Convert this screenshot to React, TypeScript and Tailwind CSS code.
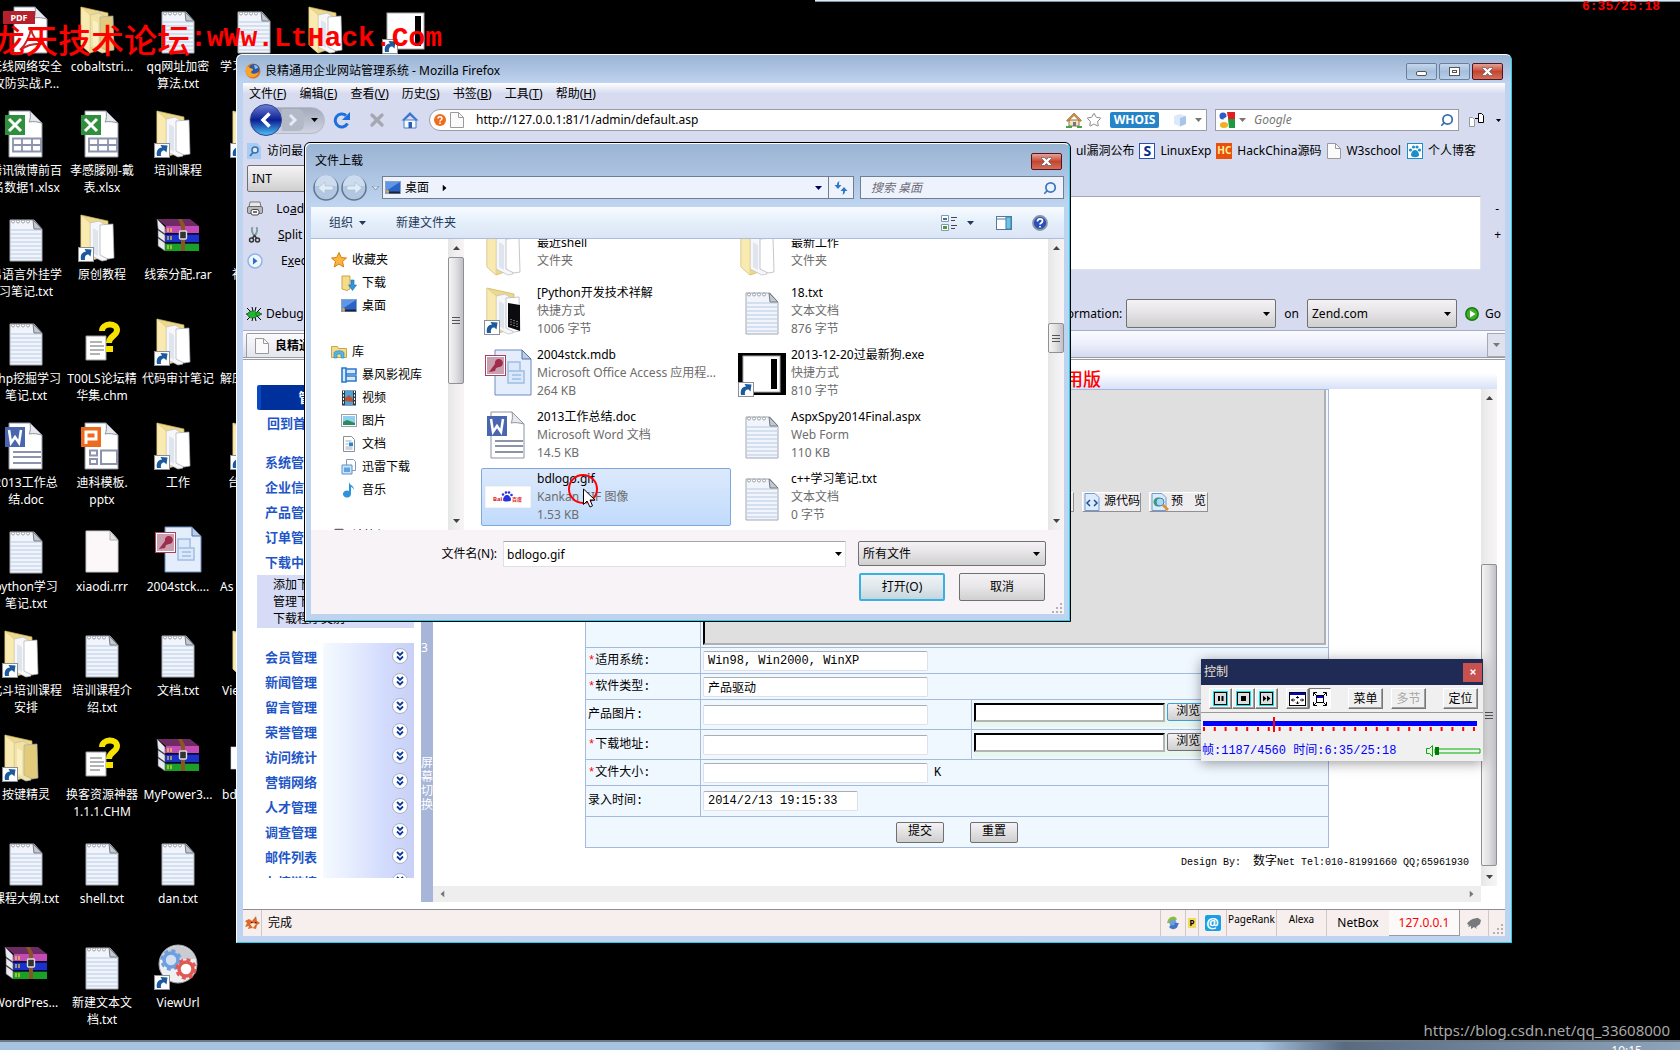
import type { ReactNode } from 'react';
import { Printer, Search, Star, X } from 'lucide-react';

/* ---------- Desktop icons ---------- */

const ShortcutMark = () => (
  <g>
    <rect x="0.5" y="33.5" width="15" height="14" fill="#fff" stroke="#8a8f98" />
    <path d="M3 46c-1-5 1-8 5-8.500l-1.500-2.500 7 .5-1 7-2-2c-3 0-4 2-3.500 5.500z" fill="#1c5a9e" />
  </g>
);

const TxtIcon = () => (
  <svg viewBox="0 0 48 48" className="size-12">
    <path d="M8 6h24l8 9v32H8z" fill="#f1f4fb" stroke="#a3a8b0" />
    <path d="M9 16h30M9 20h30M9 24h30M9 28h30M9 32h30M9 36h30M9 40h30M9 44h30" stroke="#b4cbe6" />
    <path d="M31 6l9 9h-8z" fill="#c3c7ce" stroke="#777c85" />
    <g fill="#fff" stroke="#8b9099" strokeWidth="0.8">
      <circle cx="11" cy="7.500" r="1.500" />
      <circle cx="16" cy="7.500" r="1.500" />
      <circle cx="21" cy="7.500" r="1.500" />
      <circle cx="26" cy="7.500" r="1.500" />
    </g>
  </svg>
);

type FolderProps = { shortcut?: boolean; full?: boolean; photo?: boolean };

const FolderIcon = ({ shortcut = false, full = false, photo = false }: FolderProps) => (
  <svg viewBox="0 0 48 48" className="size-12">
    <path d="M3 1l27 6v34L12 47 3 39z" fill="#ecd98c" stroke="#c9b25e" strokeWidth="0.7" />
    <path d="M12 9l9-2 8 5v34l-5 1-12-6z" fill={full ? '#f3e2a0' : '#f7f7f9'} stroke="#b9bcc4" strokeWidth="0.7" />
    <path d="M22 11l13-1 1 34-6 1-8-4z" fill={full ? '#e2cc7c' : '#ffffff'} stroke="#a9adb6" strokeWidth="0.7" />
    <path d="M15 14l5 3v25l-5-3z" fill={full ? '#fbf0c4' : '#dfe5ef'} />
    {photo && (
      <>
        <path d="M24 16l12 2v26l-12-4z" fill="#0c0c0e" />
        <path d="M27 32v6M30 33v6M33 34v6" stroke="#c8c8c8" strokeDasharray="1 1.500" />
      </>
    )}
    <path d="M3 1l9 8v38l-9-8z" fill="#f8eab0" stroke="#d9c67c" strokeWidth="0.5" />
    {shortcut && <ShortcutMark />}
  </svg>
);

const Page = ({ stroke = '#8d93a0' }: { stroke?: string }) => (
  <>
    <path d="M7 1h21l12 12v34H7z" fill="#fff" stroke={stroke} />
    <path d="M28 1c1 6 0 9-1 11 4-1 9 0 13 1z" fill="#e6e8ec" stroke={stroke} />
  </>
);

const ExcelIcon = () => (
  <svg viewBox="0 0 48 48" className="size-12">
    <Page />
    <path d="M11 28.500h28v13H11zM11 35h28M20 28.500v13M30 28.500v13" fill="none" stroke="#8b93ad" strokeWidth="1.800" />
    <rect x="3" y="5" width="20" height="20" fill="#2f8f3c" />
    <path d="M7 9l12 12M19 9L7 21" stroke="#fff" strokeWidth="3" />
  </svg>
);

const WordIcon = () => (
  <svg viewBox="0 0 48 48" className="size-12">
    <Page />
    <path d="M11 30h28M11 35h28M11 41h28" stroke="#8b93ad" strokeWidth="2" />
    <rect x="3" y="5" width="20" height="20" fill="#4a66b0" />
    <path d="M7 8l2 13 4-6 4 6 2-13" fill="none" stroke="#fff" strokeWidth="2.500" />
  </svg>
);

const PptIcon = () => (
  <svg viewBox="0 0 48 48" className="size-12">
    <Page />
    <path d="M12 28.500h7v5h-7zM12 37h7v5h-7zM23 28.500h16V42H23z" fill="none" stroke="#8b93ad" strokeWidth="2" />
    <rect x="3" y="5" width="20" height="20" fill="#ee6a1c" />
    <path d="M8 22V10h10v7H8" fill="none" stroke="#fff" strokeWidth="3" />
  </svg>
);

const PdfIcon = () => (
  <svg viewBox="0 0 48 48" className="size-12">
    <g transform="translate(5 0)">
      <Page />
    </g>
    <path d="M18 44c6-6 10-14 11-22 1 9 6 14 13 16-8-1-17 1-24 6z" fill="none" stroke="#c4282d" strokeWidth="2" />
    <rect x="1" y="5" width="32" height="13" fill="#b5202c" />
    <text x="17" y="15" textAnchor="middle" fontSize="9" fontWeight="700" fontFamily="Noto Sans, sans-serif" fill="#fff">
      PDF
    </text>
  </svg>
);

const RarIcon = () => (
  <svg viewBox="0 0 48 48" className="size-12">
    <path d="M3 5h33l9 7H12z" fill="#6d2a63" />
    <path d="M12 12h33v7H10z" fill="#c34bb4" />
    <path d="M10 20h35v8H10z" fill="#1c31c9" />
    <path d="M10 29h35v8H10z" fill="#1c9f28" />
    <path d="M10 20h35M10 29h35" stroke="#0a0a3a" strokeWidth="1.500" />
    <path d="M3 5l8 8v7L4 15zM4 16l7 5v7l-7-5zM4 24l7 5v8l-7-5z" fill="#e9eaf2" stroke="#555" strokeWidth="0.6" />
    <path d="M14 14v4M17 14v4M14 22v4M17 22v4M14 31v4M17 31v4" stroke="#f3dc3a" strokeWidth="1.200" />
    <path d="M24 5h4l3 6v26h-4V12z" fill="#8a5424" />
    <rect x="25.500" y="17" width="7" height="8" rx="1" fill="#333" stroke="#ddd" strokeWidth="1.400" />
  </svg>
);

const ChmIcon = () => (
  <svg viewBox="0 0 48 48" className="size-12">
    <path d="M8 18h20v24H8z" fill="#fff" stroke="#9a9a9a" />
    <path d="M12 24h12M12 28h14M12 32h14M12 36h10" stroke="#999" strokeWidth="1.500" />
    <path d="M24 13c0-8 15-9 15-1 0 6-8 6-8 13" fill="none" stroke="#f4e400" strokeWidth="6" />
    <rect x="28" y="28" width="7" height="6" fill="#f4e400" />
  </svg>
);

const BlankIcon = () => (
  <svg viewBox="0 0 48 48" className="size-12">
    <path d="M8 5h24l8 9v32H8z" fill="#fcf8f9" stroke="#c9c9cc" />
    <path d="M32 5v9h8z" fill="#e3e3e6" stroke="#b0b0b4" />
  </svg>
);

const AccessIcon = () => (
  <svg viewBox="0 0 48 48" className="size-12">
    <path d="M11 1h27l9 9v36H11z" fill="#e4edfb" stroke="#6c8cc0" />
    <path d="M38 1v9h9z" fill="#b9cdeb" stroke="#54709f" />
    <path d="M24 13h12v9H24zM24 22h16v12H24z" fill="#dbe8fa" stroke="#9fbde4" strokeWidth="1.500" />
    <path d="M28 26h9M28 30h9" stroke="#9fbde4" strokeWidth="1.500" />
    <rect x="1.500" y="6.500" width="20" height="20" fill="#fff" stroke="#a8415e" />
    <rect x="3" y="8" width="17" height="17" fill="#c9a0b0" />
    <path d="M5 23l6-8a4 4 0 114 3l-3 1-1 3z" fill="#a02b4d" />
  </svg>
);

const ExeIcon = () => (
  <svg viewBox="0 0 48 48" className="size-12">
    <rect x="0" y="4" width="48" height="42" fill="#000" />
    <rect x="5" y="7" width="37" height="36" fill="#fff" stroke="#aaa" />
    <rect x="33" y="10" width="6" height="30" fill="#000" />
    <ShortcutMark />
  </svg>
);

const GearsIcon = () => (
  <svg viewBox="0 0 48 48" className="size-12">
    <circle cx="24" cy="22" r="19" fill="#eef0f2" stroke="#9ea2a8" />
    <path d="M6 17a19 19 0 0136 0z" fill="#c9ccd1" />
    <circle cx="17" cy="18" r="9.500" fill="none" stroke="#6e9fe0" strokeWidth="2.500" strokeDasharray="4 3.500" />
    <circle cx="17" cy="18" r="7" fill="#d3e0f4" stroke="#6e9fe0" strokeWidth="3.500" />
    <circle cx="32" cy="27" r="9.500" fill="none" stroke="#e05a55" strokeWidth="2.500" strokeDasharray="4 3.500" />
    <circle cx="32" cy="27" r="7" fill="#fff" stroke="#e05a55" strokeWidth="3.500" />
    <ShortcutMark />
  </svg>
);

const GifIcon = () => (
  <svg viewBox="0 0 48 48" className="size-12">
    <rect x="1" y="13" width="46" height="22" fill="#fff" stroke="#d5dbe4" strokeWidth="0.6" />
    <text x="9" y="28" fontSize="6" fontWeight="700" fontFamily="Noto Sans, sans-serif" fill="#e02020">
      Bai
    </text>
    <text x="28" y="28" fontSize="5" fontWeight="700" fontFamily="Noto Sans CJK SC, sans-serif" fill="#e02020">
      百度
    </text>
    <path d="M19 27c0-3 2-5 4-5s4 2 4 5c0 2-8 2-8 0z" fill="#2932e1" />
    <circle cx="19" cy="21.500" r="1.300" fill="#2932e1" />
    <circle cx="22" cy="19.500" r="1.300" fill="#2932e1" />
    <circle cx="25" cy="19.500" r="1.300" fill="#2932e1" />
    <circle cx="27.500" cy="22" r="1.300" fill="#2932e1" />
  </svg>
);

type DesktopItem = { icon?: ReactNode; label: string; labelClass?: string };

const desktopItems: DesktopItem[] = [
  { icon: <PdfIcon />, label: '无线网络安全攻防实战.P...' },
  { icon: <FolderIcon full />, label: 'cobaltstri...' },
  { icon: <TxtIcon />, label: 'qq网址加密算法.txt' },
  { icon: <TxtIcon />, label: '学习', labelClass: 'text-left pl-1' },
  { icon: <FolderIcon />, label: '' },
  { icon: <ExeIcon />, label: '' },

  { icon: <ExcelIcon />, label: '腾讯微博前百名数据1.xlsx' },
  { icon: <ExcelIcon />, label: '孝感滕刚-戴表.xlsx' },
  { icon: <FolderIcon shortcut />, label: '培训课程' },
  { icon: <FolderIcon shortcut />, label: '' },
  { label: '' },
  { label: '' },

  { icon: <TxtIcon />, label: '易语言外挂学习笔记.txt' },
  { icon: <FolderIcon shortcut />, label: '原创教程' },
  { icon: <RarIcon />, label: '线索分配.rar' },
  { label: '社', labelClass: 'text-left pl-4' },
  { label: '' },
  { label: '' },

  { icon: <TxtIcon />, label: 'php挖掘学习笔记.txt' },
  { icon: <ChmIcon />, label: 'T00LS论坛精华集.chm' },
  { icon: <FolderIcon shortcut />, label: '代码审计笔记' },
  { label: '解压', labelClass: 'text-left pl-1' },
  { label: '' },
  { label: '' },

  { icon: <WordIcon />, label: '2013工作总结.doc' },
  { icon: <PptIcon />, label: '迪科模板.\npptx' },
  { icon: <FolderIcon shortcut />, label: '工作' },
  { icon: <FolderIcon shortcut />, label: '台', labelClass: 'text-left pl-3' },
  { label: '' },
  { label: '' },

  { icon: <TxtIcon />, label: 'python学习笔记.txt' },
  { icon: <BlankIcon />, label: 'xiaodi.rrr' },
  { icon: <AccessIcon />, label: '2004stck....' },
  { label: 'As', labelClass: 'text-left pl-1' },
  { label: '' },
  { label: '' },

  { icon: <FolderIcon shortcut />, label: '北斗培训课程安排' },
  { icon: <TxtIcon />, label: '培训课程介绍.txt' },
  { icon: <TxtIcon />, label: '文档.txt' },
  { icon: <FolderIcon />, label: 'View', labelClass: 'text-left pl-1.5' },
  { label: '' },
  { label: '' },

  { icon: <FolderIcon shortcut full />, label: '按键精灵' },
  { icon: <ChmIcon />, label: '换客资源神器1.1.1.CHM' },
  { icon: <RarIcon />, label: 'MyPower3...' },
  { icon: <GifIcon />, label: 'bdl', labelClass: 'text-left pl-1.5' },
  { label: '' },
  { label: '' },

  { icon: <TxtIcon />, label: '课程大纲.txt' },
  { icon: <TxtIcon />, label: 'shell.txt' },
  { icon: <TxtIcon />, label: 'dan.txt' },
  { label: '' },
  { label: '' },
  { label: '' },

  { icon: <RarIcon />, label: 'WordPres...' },
  { icon: <TxtIcon />, label: '新建文本文档.txt' },
  { icon: <GearsIcon />, label: 'ViewUrl' },
];

const Desktop = () => (
  <ul className="-ml-3 grid grid-cols-[repeat(6,76px)] auto-rows-[104px] pt-1.5 text-white">
    {desktopItems.map((item, i) => (
      <li key={i} className="flex flex-col items-center">
        <div className="size-12">{item.icon}</div>
        <span className={`mt-1 w-full px-px text-center leading-[17px] break-all whitespace-pre-line ${item.labelClass ?? ''}`}>{item.label}</span>
      </li>
    ))}
  </ul>
);

/* ---------- Shared bits ---------- */

const Caret = ({ className = 'fill-black' }: { className?: string }) => (
  <svg viewBox="0 0 7 4" className={`h-1 w-[7px] shrink-0 ${className}`}>
    <path d="M0 0h7L3.500 4z" />
  </svg>
);

const SheetIcon = () => (
  <svg viewBox="0 0 14 16" className="h-4 w-3.5 shrink-0">
    <path d="M.5.5h8l5 5v10H.5z" fill="#fafafa" stroke="#9a9a9a" />
    <path d="M8.500.5v5h5" fill="none" stroke="#9a9a9a" />
  </svg>
);

const CloseButton = () => (
  <button
    aria-label="关闭"
    className="flex h-[17px] w-[31px] items-center justify-center rounded-xs border border-[#541520] bg-linear-to-b from-[#e5a196] via-[#c4452f] via-50% to-[#d26e58]"
  >
    <svg viewBox="0 0 11 9" className="h-[9px] w-[11px]">
      <path d="M.5.5h3l2 2 2-2h3v1l-3 3 3 3v1h-3l-2-2-2 2h-3v-1l3-3-3-3z" fill="#fff" stroke="#5a5a6a" strokeWidth="0.700" />
    </svg>
  </button>
);

const Dropdown = ({ label, value, className }: { label: string; value: string; className: string }) => (
  <div className={`relative flex items-center ${className}`}>
    <select
      aria-label={label}
      defaultValue={value}
      className="size-full appearance-none rounded-xs border border-[#707070] bg-linear-to-b from-[#f5f2f5] via-[#e6e4e6] via-45% to-[#cfcfcf] px-1"
    >
      <option>{value}</option>
    </select>
    <Caret className="pointer-events-none absolute right-1.5 fill-black" />
  </div>
);

const ScrollBar = ({ before, thumb }: { before: string; thumb: string }) => (
  <div aria-hidden="true" className="flex w-4 shrink-0 flex-col items-center bg-linear-to-r from-[#e6e6e6] via-[#f0f0f0] to-[#f7f3f7]">
    <Caret className="my-[7px] rotate-180 fill-[#444]" />
    <div className={before} />
    <div
      className={`flex w-full flex-col items-center justify-center gap-[2px] rounded-xs border border-[#8f8f94] bg-linear-to-r from-[#f4f4f5] via-[#e0e0e2] to-[#bfc0c8] ${thumb}`}
    >
      <span className="h-px w-2 bg-[#555]" />
      <span className="h-px w-2 bg-[#555]" />
      <span className="h-px w-2 bg-[#555]" />
    </div>
    <Caret className="mt-auto mb-[7px] fill-[#444]" />
  </div>
);

const Grip = () => (
  <svg viewBox="0 0 10 10" className="size-2.5 shrink-0 fill-[#b4b0b4]">
    <path d="M8 0h2v2H8zM8 4h2v2H8zM8 8h2v2H8zM4 4h2v2H4zM4 8h2v2H4zM0 8h2v2H0z" />
  </svg>
);

/* ---------- Firefox window ---------- */

const menus = [
  ['文件', 'F'],
  ['编辑', 'E'],
  ['查看', 'V'],
  ['历史', 'S'],
  ['书签', 'B'],
  ['工具', 'T'],
  ['帮助', 'H'],
];

const TitleBar = () => (
  <div className="flex h-7 shrink-0 items-center gap-1 pt-1 pr-0.5 pl-0.5">
    <svg viewBox="0 0 16 16" className="size-4">
      <circle cx="8" cy="8" r="7.500" fill="#e4701e" />
      <circle cx="9" cy="6.500" r="5.500" fill="#2b58a8" />
      <path d="M9 2c2 0 4 1 4 3l-3 1z" fill="#8cc4ee" />
      <path d="M1 4c2-1 3 0 4 1l3 1c0 2-2 2-2 3 1 3 6 2 8-1-1 5-5 7-8 6C2 14 0 10 1 4z" fill="#f6a52a" />
    </svg>
    <h1>良精通用企业网站管理系统 - Mozilla Firefox</h1>
    <div className="ml-auto flex gap-0.5">
      <button aria-label="最小化" className="flex h-[17px] w-[31px] items-end justify-center rounded-xs border border-[#6c809c] bg-linear-to-b from-[#c6d7ec] via-[#a5bedb] via-50% to-[#b9cfea] pb-[3px]">
        <span className="h-[5px] w-[11px] rounded-xs border border-[#555] bg-white" />
      </button>
      <button aria-label="最大化" className="flex h-[17px] w-[31px] items-center justify-center rounded-xs border border-[#6c809c] bg-linear-to-b from-[#c6d7ec] via-[#a5bedb] via-50% to-[#b9cfea]">
        <span className="flex h-[9px] w-[11px] items-center justify-center border border-[#555] bg-white">
          <span className="h-[3px] w-[5px] border border-[#555]" />
        </span>
      </button>
      <CloseButton />
    </div>
  </div>
);

const NavBar = () => (
  <div className="flex h-8 shrink-0 items-center pl-1.5">
    <div className="flex h-[27px] items-center rounded-full border border-[#b4b9ca] bg-linear-to-b from-[#a4aabb] to-[#d0d4e3]">
      <button aria-label="后退" className="-my-1 rounded-full">
        <svg viewBox="0 0 32 32" className="size-8">
          <defs>
            <linearGradient id="back" x1="0" y1="0" x2="0" y2="1">
              <stop offset="0" stopColor="#6d7fd4" />
              <stop offset="0.500" stopColor="#0a1f93" />
              <stop offset="1" stopColor="#4cc4f8" />
            </linearGradient>
          </defs>
          <circle cx="16" cy="16" r="15.500" fill="url(#back)" stroke="#33438f" />
          <path d="M19.500 9.500L13 16l6.500 6.500" fill="none" stroke="#fff" strokeWidth="3.500" />
        </svg>
      </button>
      <button aria-label="前进" className="flex h-[22px] w-[22px] items-center justify-center rounded-r-md bg-[#b4b9c8]">
        <svg viewBox="0 0 10 12" className="h-3 w-2.5">
          <path d="M2 1l5 5-5 5" fill="none" stroke="#e6e9f2" strokeWidth="3" />
        </svg>
      </button>
      <button aria-label="历史" className="flex w-5 justify-center">
        <Caret />
      </button>
    </div>
    <button aria-label="刷新" className="ml-2">
      <svg viewBox="0 0 18 18" className="size-[18px]">
        <path d="M14.500 12.500A6.500 6.500 0 1113 4.500" fill="none" stroke="#1d6fdc" strokeWidth="3" />
        <path d="M17 1v8H9z" fill="#1d6fdc" />
      </svg>
    </button>
    <button aria-label="停止" className="ml-4">
      <X size={20} strokeWidth={4} className="text-[#a5a8b4]" />
    </button>
    <button aria-label="主页" className="ml-3.5">
      <svg viewBox="0 0 18 18" className="size-[18px]">
        <path d="M3 9h12v8H3z" fill="#f4f8ff" stroke="#4c7cc4" />
        <path d="M9 1L.5 9.500h3L9 4.500l5.500 5h3z" fill="#3a77d2" />
        <path d="M7.500 11h3.500v6H7.500z" fill="#2d5fb0" />
      </svg>
    </button>
    <div className="ml-2.5 flex h-[22px] min-w-0 flex-1 items-center gap-1 rounded-l-xl border border-[#9c9ca4] bg-white pr-1 pl-1">
      <svg viewBox="0 0 12 12" className="size-3 shrink-0">
        <circle cx="6" cy="6" r="6" fill="#ee6c1c" />
        <path d="M4 4.500c0-2.500 4-2.500 4 0C8 6 6 6 6 7.500M6 8.500V10" fill="none" stroke="#fff" strokeWidth="1.500" />
      </svg>
      <SheetIcon />
      <input aria-label="地址" defaultValue="http://127.0.0.1:81/1/admin/default.asp" className="ml-2 min-w-0 flex-1 outline-none" />
      <svg viewBox="0 0 16 16" className="size-4 shrink-0">
        <path d="M3 8h10v6H3z" fill="#f2e3c4" stroke="#8c7350" />
        <path d="M8 1L.5 8.500 2 9.500l6-6 6 6 1.500-1z" fill="#d5903e" stroke="#8f5c20" strokeWidth="0.600" />
        <path d="M7 10h3v4H7z" fill="#777" />
        <path d="M0 14h6v2H0zM11 14h5v2h-5z" fill="#46a546" />
      </svg>
      <Star size={16} strokeWidth={1.500} className="shrink-0 text-[#888]" />
      <span className="ml-1 flex h-4 w-[49px] shrink-0 items-center justify-center rounded-xs bg-[#2583c8] text-xs font-bold text-white">WHOIS</span>
      <svg viewBox="0 0 14 14" className="ml-2.5 size-3.5 shrink-0">
        <path d="M1 3l6-2 6 2v8l-6 2.500L1 11z" fill="#dce9fa" />
        <path d="M7 5l6-2v8l-6 2.500z" fill="#a9c6ea" />
      </svg>
      <Caret className="ml-1 fill-[#777]" />
    </div>
    <div className="ml-2 flex h-[22px] w-[244px] shrink-0 items-center gap-1 border border-[#9c9ca4] bg-white pr-1 pl-[3px]">
      <svg viewBox="0 0 16 16" className="size-4 shrink-0">
        <path d="M8 0h8v7H9z" fill="#e02020" />
        <path d="M9 7h7v9h-6z" fill="#1d9a40" />
        <circle cx="4" cy="4" r="3.500" fill="#2c5cc4" />
        <ellipse cx="5" cy="13" rx="4" ry="3" fill="#f0b020" />
        <path d="M4 7l5-3v7z" fill="#fff" />
      </svg>
      <Caret className="fill-[#777]" />
      <input aria-label="搜索" placeholder="Google" className="ml-1 min-w-0 flex-1 italic outline-none placeholder:text-[#777]" />
      <Search size={14} strokeWidth={3} className="shrink-0 -scale-x-100 text-[#3a6fa8]" />
    </div>
    <div className="flex w-[46px] items-center justify-between pr-1 pl-2.5">
      <svg viewBox="0 0 15 14" className="h-3.5 w-[15px]">
        <path d="M.5 4.500h3l2 2v7h-5z" fill="#fff" stroke="#999" />
        <path d="M9.500.5h3l2 2v7h-5z" fill="#fff" stroke="#000" />
        <path d="M6 5.500h3" stroke="#000" />
      </svg>
      <svg viewBox="0 0 5 3" className="h-[3px] w-[5px]">
        <path d="M0 0h5L2.500 3z" />
      </svg>
    </div>
  </div>
);

const Bookmarks = () => (
  <div className="flex h-[29px] shrink-0 items-center pr-[29px] pl-1">
    <svg viewBox="0 0 14 16" className="h-4 w-3.5">
      <path d="M0 0h10l4 4v12H0z" fill="#a9cdf2" />
      <circle cx="8" cy="7" r="3" fill="#dcecfb" stroke="#3b6eae" strokeWidth="1.500" />
      <path d="M6 9.500L3 13" stroke="#3b6eae" strokeWidth="1.800" />
    </svg>
    <a href="#top" className="ml-1.5">访问最多</a>
    <div className="ml-auto flex items-center gap-[5px] whitespace-nowrap">
      <a href="#vul">ul漏洞公布</a>
      <span className="flex size-4 items-center justify-center border border-[#2a4fb0] bg-white text-sm leading-none font-bold text-[#0a2d8c]">S</span>
      <a href="#linuxexp">LinuxExp</a>
      <span className="flex size-4 items-center justify-center bg-[#e8500c] text-[10px] font-bold text-[#ffef9a]">HC</span>
      <a href="#hackchina" className="mr-px">HackChina源码</a>
      <SheetIcon />
      <a href="#w3school" className="mr-px">W3school</a>
      <svg viewBox="0 0 16 16" className="size-4">
        <rect x="0.500" y="0.500" width="15" height="15" fill="#fff" stroke="#1b8fc6" />
        <path d="M4 12c0-3 2-5 4-5s4 2 4 5c0 3-8 3-8 0z" fill="#1b8fc6" />
        <circle cx="3.500" cy="7" r="1.600" fill="#1b8fc6" />
        <circle cx="6.500" cy="4" r="1.600" fill="#1b8fc6" />
        <circle cx="10" cy="4" r="1.600" fill="#1b8fc6" />
        <circle cx="12.500" cy="7" r="1.600" fill="#1b8fc6" />
      </svg>
      <a href="#blog">个人博客</a>
    </div>
  </div>
);

const HackBar = () => (
  <div className="shrink-0 pb-[23px] pl-1">
    <Dropdown label="类型" value="INT" className="h-[27px] w-32" />
    <div className="mt-1 flex">
      <div className="flex w-24 shrink-0 flex-col">
        <button className="flex h-[26px] items-center">
          <svg viewBox="0 0 16 16" className="size-4">
            <path d="M3 1h10l1 5H2z" fill="#e8e8ea" stroke="#777" />
            <rect x="0.500" y="5.500" width="15" height="7" rx="1.500" fill="#b9babd" stroke="#6c6c70" />
            <rect x="4" y="8.500" width="8" height="5.500" rx="2" fill="#fff" stroke="#444" />
            <path d="M6 11h4" stroke="#444" strokeWidth="1.500" />
          </svg>
          <span className="ml-3 w-14 text-center">Lo<u>a</u>d URL</span>
        </button>
        <button className="flex h-[26px] items-center">
          <svg viewBox="0 0 16 16" className="size-4">
            <path d="M5.500 0C4 3 5 6 8 10M9.500 0C11 3 10 6 7 10" fill="none" stroke="#7d9c9c" strokeWidth="1.800" />
            <circle cx="4.500" cy="13" r="2" fill="none" stroke="#333" strokeWidth="1.500" />
            <circle cx="10.500" cy="13" r="2" fill="none" stroke="#333" strokeWidth="1.500" />
            <path d="M5.500 11l2-2.500 2 2.500" fill="none" stroke="#333" strokeWidth="1.500" />
          </svg>
          <span className="ml-3 w-14 text-center"><u>S</u>plit URL</span>
        </button>
        <button className="flex h-[26px] items-center">
          <svg viewBox="0 0 16 16" className="size-4">
            <circle cx="8" cy="8" r="7" fill="#eef5fe" stroke="#8fb4e6" strokeWidth="1.500" />
            <path d="M6 4.500L10.500 8 6 11.500z" fill="#2d6fc8" />
          </svg>
          <span className="ml-3 w-14 text-center">E<u>x</u>ecute</span>
        </button>
      </div>
      <textarea aria-label="请求" className="h-[74px] min-w-0 flex-1 resize-none border border-[#e3e3e8] border-t-[#a5a5ad] bg-white" />
      <div className="flex w-6 shrink-0 flex-col items-end pr-1">
        <button className="h-[26px] px-0.5">-</button>
        <button className="h-[26px]">+</button>
      </div>
    </div>
  </div>
);

const DebugBar = () => (
  <div className="flex h-[34px] shrink-0 items-center border-b border-[#a8aec6] pr-1 pl-[3px]">
    <svg viewBox="0 0 16 16" className="size-4">
      <path d="M1 2l4 4M15 2l-4 4M0 8h16M1 14l4-4M15 14l-4-4M6 1l1 4M10 1L9 5M6 15l1-4M10 15l-1-4" stroke="#000" />
      <ellipse cx="6.500" cy="8.500" rx="5" ry="3.500" fill="#1fb52f" stroke="#0a4a10" strokeWidth="0.600" />
      <circle cx="12" cy="8" r="2.200" fill="#1fb52f" stroke="#0a4a10" strokeWidth="0.600" />
    </svg>
    <button className="ml-1">Debug</button>
    <span className="mr-1 ml-auto">formation:</span>
    <Dropdown label="搜索内容" value="" className="h-[29px] w-[150px]" />
    <span className="mx-2">on</span>
    <Dropdown label="搜索站点" value="Zend.com" className="h-[29px] w-[150px]" />
    <button className="ml-2 flex items-center gap-1.5">
      <svg viewBox="0 0 14 14" className="size-3.5">
        <circle cx="7" cy="7" r="6.200" fill="#3fae2a" stroke="#1d7a12" strokeWidth="1.500" />
        <path d="M5 3.500L10.500 7 5 10.500z" fill="#fff" />
      </svg>
      Go
    </button>
  </div>
);

const TabBar = () => (
  <div className="flex h-[29px] shrink-0 items-end justify-between border-b-[3px] border-double border-[#9c9ca0] bg-linear-to-b from-[#fafbff] via-[#eceffa] via-50% to-[#d4daf0] pl-[3px]">
    <button className="flex h-6 w-44 items-center gap-1.5 rounded-t-xs border border-b-0 border-[#9c9ca0] bg-linear-to-b from-[#fafafc] to-[#e4e6ee] pl-2 font-bold">
      <SheetIcon />
      良精通用企业
    </button>
    <button aria-label="所有标签" className="flex h-6 w-[18px] items-center justify-center border border-r-0 border-[#a8a8b0] bg-[#dfe2ee]">
      <Caret className="fill-[#777]" />
    </button>
  </div>
);

const sideTop = ['系统管理', '企业信息', '产品管理', '订单管理', '下载中心'];
const sideSub = ['添加下载程序', '管理下载程序', '下载程序类别'];
const sideBottom = ['会员管理', '新闻管理', '留言管理', '荣誉管理', '访问统计', '营销网络', '人才管理', '调查管理', '邮件列表', '友情链接'];

const Sidebar = () => (
  <nav className="flex w-[178px] shrink-0 flex-col overflow-hidden pt-[25px] pr-[7px] pb-6 pl-3.5 text-[13px] font-bold text-[#1e56c8]">
    <div className="flex h-[25px] shrink-0 items-center justify-center rounded-l-xs border-l-4 border-[#0a4ac0] bg-[#00309c] text-white">管理中心首页</div>
    <a href="#home" className="flex h-7 shrink-0 items-center pl-2.5">回到首页</a>
    <div className="mt-3 shrink-0 pl-2">
      {sideTop.map((name) => (
        <a key={name} href="#menu" className="flex h-[25px] items-center">{name}</a>
      ))}
    </div>
    <div className="shrink-0 bg-[#d6dcf6] py-px pl-4 text-xs font-normal text-black">
      {sideSub.map((name) => (
        <a key={name} href="#sub" className="block leading-[17px]">{name}</a>
      ))}
    </div>
    <div className="mt-[15px] min-h-0 flex-1 overflow-hidden bg-[linear-gradient(90deg,#fff_42%,#f5faff_42%,#e6edfe_60%,#d4dcfe_80%,#c8d1f5)] pl-2">
      {sideBottom.map((name) => (
        <a key={name} href="#menu" className="flex h-[25px] items-center justify-between pr-1.5">
          <span className="pt-1">{name}</span>
          <svg viewBox="0 0 16 16" className="size-4">
            <circle cx="8" cy="8" r="7.500" fill="#fff" stroke="#aab0cc" />
            <path d="M5 4l3 3 3-3M5 8.500l3 3 3-3" fill="none" stroke="#0a3aa0" strokeWidth="1.800" />
          </svg>
        </a>
      ))}
    </div>
  </nav>
);

const cell = 'border border-[#a6b8dc] bg-[#eff7ff] px-0.5 py-0 align-middle';
const field = 'h-5 rounded-xs border border-[#e0e0ea] border-t-[#abadb3] bg-white px-1 text-xs outline-none';
const editorBtn = 'flex h-5 items-center border border-white border-r-[#909090] border-b-[#909090] bg-[#f0edf0] whitespace-nowrap';

const FieldLabel = ({ text, id, required = false }: { text: string; id: string; required?: boolean }) => (
  <label htmlFor={id}>
    {required && <span className="text-[#ff0000]">*</span>}
    {text}
  </label>
);

const BrowseCell = ({ label, focused = false }: { label: string; focused?: boolean }) => (
  <td className={cell}>
    <div className="flex h-6 items-start gap-0.5 overflow-hidden bg-[#e8f6ee]">
      <input aria-label={label} className="h-[19px] w-[191px] border-2 border-[#b4b4b4] border-t-black border-l-black bg-white outline-none" />
      <button
        className={`h-[18px] w-16 rounded-xs border bg-linear-to-b from-[#f5f2f5] to-[#cfcfcf] text-xs leading-none ${focused ? 'border-[#3c9fd8]' : 'border-[#707070]'}`}
      >
        浏览...
      </button>
    </div>
  </td>
);

const EditorPage = () => (
  <div className="flex min-w-0 flex-1 flex-col">
    <div className="mr-2 flex h-[29px] shrink-0 items-end justify-end bg-linear-to-b from-white from-45% to-[#d8e1f7] pr-[396px] text-lg leading-[19px] font-medium text-[#ff0000]">
      用版
    </div>
    <div className="flex min-h-0 flex-1 pr-2">
      <div className="min-w-0 flex-1 overflow-hidden font-[Liberation_Mono,Noto_Sans_CJK_SC,monospace]">
        <table className="mx-auto w-[71%] table-fixed border-collapse">
          <colgroup>
            <col className="w-[115px]" />
            <col className="w-[271px]" />
            <col />
          </colgroup>
          <tbody>
            <tr>
              <td className={cell} />
              <td className={cell} colSpan={2}>
                <div className="mb-0.5 flex h-[255px] items-start justify-end gap-2 border-2 border-t-0 border-[#b0b0b0] border-l-black bg-[#dfdfdf] pt-[102px] pr-[116px]">
                  <button className={`${editorBtn} px-0.5`}>设计</button>
                  <button className={`${editorBtn} w-[59px] gap-1 px-px`}>
                    <svg viewBox="0 0 16 18" className="h-[18px] w-4 shrink-0">
                      <path d="M1 .5h10l4 4v13H1z" fill="#dcebfb" stroke="#6f9bd0" />
                      <path d="M6 7L3 10l3 3M10 7l3 3-3 3" fill="none" stroke="#1c4f96" strokeWidth="1.500" />
                    </svg>
                    源代码
                  </button>
                  <button className={`${editorBtn} w-[59px] gap-0.5 px-px`}>
                    <svg viewBox="0 0 18 18" className="size-[18px] shrink-0">
                      <path d="M1 .5h10l4 4v13H1z" fill="#dcebfb" stroke="#6f9bd0" />
                      <circle cx="7" cy="9" r="4.500" fill="#3aa06a" />
                      <circle cx="9" cy="9" r="4" fill="#a5dcf3" stroke="#4d7fae" />
                      <path d="M12 12l5 5" stroke="#e09030" strokeWidth="2.500" />
                    </svg>
                    <span className="flex flex-1 justify-between">
                      <span>预</span>
                      <span>览</span>
                    </span>
                  </button>
                </div>
              </td>
            </tr>
            <tr className="h-[26px]">
              <td className={cell}><FieldLabel id="system" text="适用系统:" required /></td>
              <td className={cell} colSpan={2}><input id="system" defaultValue="Win98, Win2000, WinXP" className={`${field} w-[225px]`} /></td>
            </tr>
            <tr className="h-[26px]">
              <td className={cell}><FieldLabel id="kind" text="软件类型:" required /></td>
              <td className={cell} colSpan={2}><input id="kind" defaultValue="产品驱动" className={`${field} w-[225px]`} /></td>
            </tr>
            <tr className="h-[30px]">
              <td className={cell}><FieldLabel id="image" text="产品图片:" /></td>
              <td className={cell}><input id="image" className={`${field} w-[225px]`} /></td>
              <BrowseCell label="产品图片文件" focused />
            </tr>
            <tr className="h-[30px]">
              <td className={cell}><FieldLabel id="url" text="下载地址:" required /></td>
              <td className={cell}><input id="url" className={`${field} w-[225px]`} /></td>
              <BrowseCell label="下载文件" />
            </tr>
            <tr className="h-[26px]">
              <td className={cell}><FieldLabel id="size" text="文件大小:" required /></td>
              <td className={cell} colSpan={2}>
                <input id="size" className={`${field} w-[225px]`} />
                <span className="ml-1.5">K</span>
              </td>
            </tr>
            <tr className="h-[31px]">
              <td className={cell}><FieldLabel id="time" text="录入时间:" /></td>
              <td className={cell} colSpan={2}><input id="time" defaultValue="2014/2/13 19:15:33" className={`${field} w-[155px]`} /></td>
            </tr>
            <tr className="h-[31px]">
              <td className={cell} colSpan={3}>
                <div className="flex justify-center gap-[26px]">
                  <button className="h-[21px] w-12 rounded-xs border border-[#707070] bg-linear-to-b from-[#f5f2f5] to-[#cfcfcf]">提交</button>
                  <button className="h-[21px] w-12 rounded-xs border border-[#707070] bg-linear-to-b from-[#f5f2f5] to-[#cfcfcf]">重置</button>
                </div>
              </td>
            </tr>
          </tbody>
        </table>
        <p className="mt-1.5 pr-3 text-right text-[10px]">
          Design By:&nbsp; <span className="text-xs">数字</span>Net Tel:010-81991660 QQ;65961930
        </p>
      </div>
      <ScrollBar before="h-[157px]" thumb="h-[302px]" />
    </div>
    <div aria-hidden="true" className="mr-6 flex h-4 shrink-0 items-center justify-between bg-[#eeeeee] px-1.5">
      <Caret className="rotate-90 fill-[#777]" />
      <Caret className="-rotate-90 fill-[#777]" />
    </div>
  </div>
);

const stat = 'flex items-center justify-center border-l border-[#cfc8c8]';

const StatusBar = () => (
  <footer className="flex h-[27px] shrink-0 border-t border-[#8f8f8f] bg-[#f7eeee]">
    <div className="flex w-[19px] items-center justify-center border-r border-[#cfc8c8]">
      <svg viewBox="0 0 16 16" className="size-4">
        <path d="M1 6l4-2 3 2 4-5 1 5 3 2-3 2-1 4-4-1-4 1 1-3-4 1 2-4z" fill="#d9692c" />
        <path d="M6 9l3-1 3 1-3 4z" fill="#fbe9da" />
        <path d="M7 7.500h1.500M11 7.500h1.500" stroke="#4a1c08" strokeWidth="1.200" />
      </svg>
    </div>
    <span className="self-center pl-1.5">完成</span>
    <div className={`${stat} ml-auto w-[25px]`}>
      <svg viewBox="0 0 14 14" className="size-3.5">
        <path d="M2 4a5 5 0 019-1l-2 2a3 3 0 00-4 1l1 1H1z" fill="#8cc03a" />
        <circle cx="7" cy="7" r="3.500" fill="#6f9fdc" />
        <path d="M12 9a5 5 0 01-9 2l2-2a3 3 0 004-1L8 7h5z" fill="#3f77c4" />
      </svg>
    </div>
    <div className={`${stat} w-[13px] text-[8px] font-bold`}>
      <span className="bg-[#f0dc5a] px-0.5">P</span>
    </div>
    <div className={`${stat} w-7`}>
      <span className="flex size-4 items-center justify-center rounded-xs bg-[#18a0e6] text-sm leading-none font-bold text-white">@</span>
    </div>
    <div className={`${stat} w-[50px] pb-1.5 text-[10px]`}>PageRank</div>
    <div className={`${stat} w-[50px] pb-1.5 text-[10px]`}>Alexa</div>
    <div className={`${stat} w-[63px]`}>NetBox</div>
    <div className="flex w-[71px] items-center justify-center border-r border-b border-[#9c9c9c] bg-[#fcf9f9] text-[#ff0000]">127.0.0.1</div>
    <div className="flex w-7 items-center justify-center">
      <svg viewBox="0 0 16 14" className="h-3.5 w-4">
        <path d="M1 8c2-4 7-6 11-6l3 2-1 4-4 3 1 2-3-2-3 2v-3l-3 1 1-2z" fill="#77797c" />
      </svg>
    </div>
    <div className="flex w-[17px] items-end justify-end border-l border-[#cfc8c8] p-0.5">
      <Grip />
    </div>
  </footer>
);

const FirefoxWindow = () => (
  <section className="absolute top-[54px] right-[168px] bottom-[107px] left-[236px] flex flex-col rounded-t-md border border-t-white border-r-[#24d0e8] border-b-[#24d0e8] border-l-white bg-[#bed3ef] bg-linear-to-b from-[#9ab4d3] to-[#bed3ef] to-[28px] px-1.5 pb-1.5">
    <TitleBar />
    <div className="flex min-h-0 flex-1 flex-col bg-[#d6dbef]">
      <div className="flex h-[21px] shrink-0 items-center gap-[13px] bg-linear-to-b from-white to-[#d6dbef] to-50% pl-1.5">
        {menus.map(([name, key]) => (
          <button key={key}>
            {name}(<u>{key}</u>)
          </button>
        ))}
      </div>
      <NavBar />
      <Bookmarks />
      <HackBar />
      <DebugBar />
      <TabBar />
      <main className="flex min-h-0 flex-1 bg-white pb-[7px]">
        <Sidebar />
        <div className="w-3 shrink-0 bg-[#a6b5d8] pt-[281px] text-xs leading-[14px] text-white">
          <div>3</div>
          <div className="mt-[101px]">屏幕切换</div>
        </div>
        <EditorPage />
      </main>
      <StatusBar />
    </div>
  </section>
);

/* ---------- Upload dialog ---------- */

const MiniDesktop = () => (
  <svg viewBox="0 0 16 13" className="h-[13px] w-4 shrink-0">
    <rect x="0.500" y="0.500" width="15" height="12" fill="#2a63c4" stroke="#8aa2c4" />
    <path d="M1 1h14L1 10z" fill="#5f97e6" />
    <path d="M4 10.500h11v2H4z" fill="#1b2433" />
    <circle cx="2.500" cy="10.500" r="1.500" fill="#f2a53a" />
  </svg>
);

const placeIcons: Record<string, ReactNode> = {
  收藏夹: (
    <svg viewBox="0 0 16 16" className="size-4">
      <path d="M8 .5l2.300 5 5.200.5-4 3.500 1.200 5.500L8 12l-4.700 3 1.200-5.500-4-3.500 5.200-.5z" fill="#fbb73c" stroke="#d97a16" />
    </svg>
  ),
  下载: (
    <svg viewBox="0 0 16 16" className="size-4">
      <path d="M1 1h8v13l-3 1.500L1 14z" fill="#f3dc8c" stroke="#c9a548" />
      <path d="M10 5h3v5h2.500l-4 5.500-4-5.500H10z" fill="#2f97e0" stroke="#1769ac" strokeWidth="0.600" />
    </svg>
  ),
  桌面: <MiniDesktop />,
  库: (
    <svg viewBox="0 0 16 14" className="size-4">
      <path d="M.5 1.500h6l1 2h8v9H.5z" fill="#f3dc8c" stroke="#c9a548" />
      <path d="M3 13V8c0-3 10-3 10 0v5h-3V9H6v4z" fill="#58b4e4" stroke="#2d83b8" strokeWidth="0.600" />
    </svg>
  ),
  暴风影视库: (
    <svg viewBox="0 0 16 16" className="size-4">
      <path d="M1 1h4v14H1zM5 2h10v5H5zM5 9h10v5H5z" fill="#d6e9fb" stroke="#2b78cc" strokeWidth="1.600" />
    </svg>
  ),
  视频: (
    <svg viewBox="0 0 16 16" className="size-4">
      <rect x="1" y="0.500" width="14" height="15" fill="#2d3a44" />
      <rect x="4" y="1" width="8" height="14" fill="#4aa3dc" />
      <path d="M4 8l4-3 4 4v3l-8-1z" fill="#c0502c" />
      <path d="M2.500 1v14M13.500 1v14" stroke="#fff" strokeDasharray="2 1.500" />
    </svg>
  ),
  图片: (
    <svg viewBox="0 0 16 14" className="size-4">
      <rect x="0.500" y="0.500" width="15" height="12" fill="#fff" stroke="#9a9fa8" />
      <path d="M2 2h12v9H2z" fill="#8fd0f0" />
      <path d="M2 8l4-2 8 3v2H2z" fill="#2c8a5c" />
    </svg>
  ),
  文档: (
    <svg viewBox="0 0 16 16" className="size-4">
      <path d="M2.500.5h8l3 3v12h-11z" fill="#fff" stroke="#8a8f98" />
      <path d="M4.500 5h6M4.500 8h3M4.500 11h7M4.500 13h7" stroke="#9ab" />
      <rect x="8" y="6.500" width="4" height="3.500" fill="#2b86c8" />
    </svg>
  ),
  迅雷下载: (
    <svg viewBox="0 0 16 16" className="size-4">
      <path d="M5.500.5h7l2 2v9h-9z" fill="#fff" stroke="#7f9ab8" />
      <path d="M1 6h10v9H1z" fill="#cfe3f7" stroke="#5e90c4" />
      <path d="M3 8.500h6V13H3z" fill="#5aa6e4" />
    </svg>
  ),
  音乐: (
    <svg viewBox="0 0 16 16" className="size-4">
      <path d="M8 0c1 4 5 3 5 8-1-2-2-3-3-3v7a4 3.500 0 11-2-3z" fill="#2d93dc" />
    </svg>
  ),
  计算机: <Printer size={16} className="text-[#666]" />,
};

const places = [
  { head: '收藏夹', items: ['下载', '桌面'] },
  { head: '库', items: ['暴风影视库', '视频', '图片', '文档', '迅雷下载', '音乐'] },
  { head: '计算机', items: [] },
];

const files = [
  { icon: <FolderIcon />, name: '最近shell', kind: '文件夹' },
  { icon: <FolderIcon />, name: '最新工作', kind: '文件夹' },
  { icon: <FolderIcon shortcut photo />, name: '[Python开发技术祥解', kind: '快捷方式', size: '1006 字节' },
  { icon: <TxtIcon />, name: '18.txt', kind: '文本文档', size: '876 字节' },
  { icon: <AccessIcon />, name: '2004stck.mdb', kind: 'Microsoft Office Access 应用程...', size: '264 KB' },
  { icon: <ExeIcon />, name: '2013-12-20过最新狗.exe', kind: '快捷方式', size: '810 字节' },
  { icon: <WordIcon />, name: '2013工作总结.doc', kind: 'Microsoft Word 文档', size: '14.5 KB' },
  { icon: <TxtIcon />, name: 'AspxSpy2014Final.aspx', kind: 'Web Form', size: '110 KB' },
  { icon: <GifIcon />, name: 'bdlogo.gif', kind: 'Kankan GIF 图像', size: '1.53 KB', selected: true },
  { icon: <TxtIcon />, name: 'c++学习笔记.txt', kind: '文本文档', size: '0 字节' },
];

const RoundArrow = ({ label, flip = false }: { label: string; flip?: boolean }) => (
  <button aria-label={label}>
    <svg viewBox="0 0 26 26" className={`size-[26px] ${flip ? '-scale-x-100' : ''}`}>
      <circle cx="13" cy="13" r="12" fill="#b3c8e0" stroke="#5f7690" strokeWidth="1.500" />
      <path d="M2 11a11 11 0 0122 0z" fill="#ccdbed" />
      <path d="M5 13l7-6v4h8v4h-8v4z" fill="#e2ecf7" stroke="#a3b9d2" strokeWidth="0.600" />
    </svg>
  </button>
);

const UploadDialog = () => (
  <section role="dialog" aria-label="文件上载" className="absolute top-[142px] left-[304px] w-[767px] rounded-t-md border border-black bg-[#bed3ef]">
    <div className="rounded-t-md border border-t-white border-r-[#24d0e8] border-b-[#24d0e8] border-l-white bg-linear-to-b from-[#9ab4d3] to-[#bed3ef] to-[60px] px-[5px] pb-1.5">
      <div className="flex h-8 items-center justify-between pt-0.5 pr-0.5 pl-1">
        <h2>文件上载</h2>
        <CloseButton />
      </div>
      <div className="flex h-[23px] items-center">
        <div className="flex items-center gap-0.5 pl-0.5">
          <RoundArrow label="后退" />
          <RoundArrow label="前进" flip />
          <Caret className="mx-[3px] fill-[#e0eaf5] stroke-[#7d93ad]" />
        </div>
        <div className="flex h-[23px] flex-1 items-center border border-[#6f7f92] bg-[#eef2fd] pl-0.5">
          <MiniDesktop />
          <span className="ml-1">桌面</span>
          <Caret className="ml-3 -rotate-90 fill-black" />
          <Caret className="mr-1.5 ml-auto fill-[#000060]" />
          <button aria-label="刷新" className="flex h-full w-[25px] items-center justify-center border-l border-[#6f7f92]">
            <svg viewBox="0 0 14 14" className="size-3.5">
              <path d="M5.500 0C3 1 3 3 3 4H.5L4 8l3.500-4H5c0-2 0-3 .5-4zM8.500 14c2.500-1 2.500-3 2.500-4h2.500L10 6l-3.500 4H9c0 2 0 3-.5 4z" fill="#2d78c8" />
            </svg>
          </button>
        </div>
        <div className="ml-1.5 flex h-[23px] w-[204px] items-center border border-[#6f7f92] bg-[#eef2fd] pr-1.5 pl-2.5">
          <input aria-label="搜索" placeholder="搜索 桌面" className="min-w-0 flex-1 italic outline-none placeholder:text-[#6d6d78]" />
          <Search size={14} strokeWidth={3} className="-scale-x-100 text-[#3a78c0]" />
        </div>
      </div>

      <div className="mt-2 flex h-8 items-center border-b border-[#a9bedb] bg-linear-to-b from-[#f8fbff] via-[#e6f0fb] via-45% to-[#dbe5f6] pr-4 pl-[18px] text-[#1e395b]">
        <button className="flex items-center gap-1.5">
          组织
          <Caret className="fill-[#1e395b]" />
        </button>
        <button className="ml-[30px]">新建文件夹</button>
        <button aria-label="更改视图" className="ml-auto flex items-center gap-2.5">
          <svg viewBox="0 0 16 16" className="size-4">
            <path d="M.5.5h7v6h-7zM.5 9.500h7v6h-7z" fill="#fff" stroke="#8898aa" />
            <path d="M2 3h4v2H2z" fill="#2d78b0" />
            <path d="M2 11h4v3H2z" fill="#3fa03c" />
            <path d="M10 2.500h6M10 5.500h4M10 10.500h6M10 13.500h4" stroke="#445" />
          </svg>
          <Caret className="fill-[#1e395b]" />
        </button>
        <button aria-label="预览窗格" className="ml-[22px]">
          <svg viewBox="0 0 16 14" className="h-3.5 w-4">
            <rect x="0.500" y="0.500" width="15" height="13" fill="#fff" stroke="#5a7898" />
            <path d="M1 3h9" stroke="#5a7898" />
            <rect x="10" y="1" width="5" height="12" fill="#6cc4e4" stroke="#3a7ea8" />
          </svg>
        </button>
        <button aria-label="帮助" className="ml-5">
          <svg viewBox="0 0 16 16" className="size-4">
            <circle cx="8" cy="8" r="7" fill="#2a4fb8" stroke="#8a93a4" strokeWidth="1.800" />
            <path d="M5.500 6.500c0-3.500 5-3.500 5-.5 0 2-2.500 1.800-2.500 3.500M8 11v1.600" fill="none" stroke="#fff" strokeWidth="1.800" />
          </svg>
        </button>
      </div>

      <div className="flex h-[291px] overflow-hidden bg-white">
        <nav className="flex flex-1 flex-col gap-[23px] overflow-hidden pt-[9px] pl-5">
          {places.map((group) => (
            <ul key={group.head}>
              <li className="flex h-[23px] items-center gap-[5px]">
                {placeIcons[group.head]}
                {group.head}
              </li>
              {group.items.map((name) => (
                <li key={name} className="flex h-[23px] items-center gap-[5px] pl-2.5">
                  {placeIcons[name]}
                  {name}
                </li>
              ))}
            </ul>
          ))}
        </nav>
        <ScrollBar before="hidden" thumb="h-[127px]" />
        <div className="-mt-[19px] ml-[17px] grid w-[504px] shrink-0 grid-cols-[250px_250px] content-start gap-1">
          {files.map((file) => (
            <button
              key={file.name}
              className={`flex h-[58px] items-center gap-[5px] rounded-xs border pr-1 pl-0.5 text-left leading-[18px] whitespace-nowrap ${
                file.selected ? 'border-[#7fa9dc] bg-linear-to-b from-[#dce9fc] to-[#c1dbfc]' : 'border-transparent'
              } ${file.size ? '' : 'pt-1.5'}`}
            >
              <span className="size-12 shrink-0">{file.icon}</span>
              <span className="flex min-w-0 flex-col text-[#6d6d6d]">
                <span className="text-black">{file.name}</span>
                <span className="truncate">{file.kind}</span>
                {file.size && <span>{file.size}</span>}
              </span>
            </button>
          ))}
        </div>
        <div className="ml-auto flex pl-[63px]">
          <ScrollBar before="h-[66px]" thumb="h-[30px]" />
        </div>
      </div>

      <div className="flex h-[84px] flex-col bg-[#f7f3f7] pt-[11px]">
        <div className="flex justify-end pr-[18px]">
          <div className="flex items-center">
            <label htmlFor="filename">文件名(N):</label>
            <div className="relative ml-1.5 flex h-[26px] w-[343px] items-center">
              <input id="filename" defaultValue="bdlogo.gif" className="size-full border border-[#e0dfe4] border-t-[#a5a5ad] bg-white px-[3px] outline-none" />
              <Caret className="pointer-events-none absolute right-1 fill-black" />
            </div>
          </div>
          <Dropdown label="文件类型" value="所有文件" className="ml-3 h-[25px] w-[188px]" />
        </div>
        <div className="mt-1.5 flex justify-end gap-3.5 pr-[19px]">
          <button className="h-7 w-[86px] rounded-xs border-2 border-[#38b0e0] bg-linear-to-b from-[#eef3f6] via-[#e0e8ec] via-50% to-[#c6d6de]">打开(O)</button>
          <button className="h-7 w-[86px] rounded-xs border border-[#707070] bg-linear-to-b from-[#f5f2f5] via-[#e8e6e8] via-50% to-[#d0d0d0]">取消</button>
        </div>
        <div className="flex justify-end pt-0.5 pr-0.5">
          <Grip />
        </div>
      </div>
    </div>
  </section>
);

/* ---------- Player control ---------- */

const toolBtn = 'flex h-[21px] items-center justify-center border border-t-white border-l-white border-r-[#777] border-b-[#777] bg-[#f0f0f0] shadow-[inset_-1px_-1px_0_#a0a0a0]';

const PlayIcon = ({ children }: { children: ReactNode }) => (
  <svg viewBox="0 0 15 15" className="size-[15px]">
    <rect width="15" height="15" fill="#00e5ee" />
    <rect x="1.500" y="1.500" width="12" height="12" fill="#ddd" stroke="#000" />
    {children}
  </svg>
);

const ControlPanel = () => (
  <section aria-label="控制" className="absolute top-[659px] right-[197px] w-[282px] bg-[#f0f0f0] shadow-[0_2px_12px_rgba(0,0,0,0.4)]">
    <div className="flex h-[26px] items-center justify-between bg-[#1f2a55] pr-px pl-[3px] text-[#e8e0d0]">
      控制
      <button aria-label="关闭" className="flex h-[19px] w-[19px] items-center justify-center bg-[#c75050] text-white">
        <X size={8} strokeWidth={4} />
      </button>
    </div>
    <div className="flex h-7 items-center border-b border-[#999] pr-[5px] pl-2">
      <button aria-label="暂停" className={`${toolBtn} w-[23px]`}>
        <PlayIcon><path d="M5 5h2v5H5zM8.500 5h2v5h-2z" /></PlayIcon>
      </button>
      <button aria-label="停止" className={`${toolBtn} w-[23px]`}>
        <PlayIcon><path d="M5 5h5v5H5z" /></PlayIcon>
      </button>
      <button aria-label="快进" className={`${toolBtn} w-[23px]`}>
        <PlayIcon><path d="M4 4.500l3.500 3-3.500 3zM8 4.500l3.500 3-3.500 3z" /></PlayIcon>
      </button>
      <button aria-label="适应窗口" className={`${toolBtn} ml-2 w-[23px]`}>
        <svg viewBox="0 0 17 14" className="h-3.5 w-[17px]">
          <rect x="0.500" y="0.500" width="16" height="13" fill="#fff" stroke="#000" />
          <path d="M1 1h15v2H1z" fill="#0000d8" />
          <path d="M8.500 4.500v2M8.500 9.500v2.500M2.500 8H6M11 8h3.500M4 6.500L2.500 8 4 9.500M13 6.500L14.500 8 13 9.500M7 6l1.500-1.500L10 6M7 10.500L8.500 12l1.500-1.500" fill="none" stroke="#000" />
        </svg>
      </button>
      <button aria-label="全屏" className="flex h-[21px] w-[22px] items-center justify-center border border-t-[#777] border-l-[#777] border-r-white border-b-white bg-[#fafafa]">
        <svg viewBox="0 0 14 14" className="size-3.5">
          <path d="M.5 4V.5H4M10 .5h3.500V4M13.500 10v3.500H10M4 13.500H.5V10M1 1l3 3M13 1l-3 3M1 13l3-3M13 13l-3-3" fill="none" stroke="#000" />
          <rect x="3.500" y="3.500" width="7" height="7" fill="#fff" stroke="#000" />
          <path d="M4 4h6v2H4z" fill="#0000d8" />
        </svg>
      </button>
      <button className={`${toolBtn} ml-[17px] w-[35px]`}>菜单</button>
      <button disabled className={`${toolBtn} ml-2 w-[35px] text-[#a8a8a8]`}>多节</button>
      <button className={`${toolBtn} ml-auto w-[35px]`}>定位</button>
    </div>
    <div className="px-0.5 pt-1">
      <svg viewBox="0 0 274 16" className="h-4 w-[274px]">
        <path d="M0 6.500h274" stroke="#0000ff" strokeWidth="5" />
        <path d="M0 12h272" stroke="#ff0000" strokeWidth="4" strokeDasharray="2 8.800" />
        <path d="M71 0v15" stroke="#ff0000" strokeWidth="2" />
      </svg>
    </div>
    <div className="flex h-7 items-center justify-between pt-2 pr-0.5 pl-px font-[Liberation_Mono,Noto_Sans_CJK_SC,monospace] text-[#0000ff]">
      <span>帧:1187/4560 时间:6:35/25:18</span>
      <svg viewBox="0 0 55 12" className="h-3 w-[55px]">
        <path d="M.5 3.500h3l3-3v11l-3-3h-3z" fill="none" stroke="#00b000" />
        <path d="M9 4h45v4H9z" fill="none" stroke="#00b000" />
        <rect x="9" y="2" width="4" height="8" fill="#007a00" />
      </svg>
    </div>
  </section>
);

export default function App() {
  return (
    <div className="relative h-screen overflow-hidden bg-black font-[Noto_Sans,Noto_Sans_CJK_SC,sans-serif] text-xs text-black">
      <Desktop />

      <div className="absolute top-0 right-0 flex h-0.5 w-[865px] gap-0.5 border-b border-[#7e95a4] bg-[#dfe8f0]" />

      <p className="absolute top-[21px] -left-2 flex items-center text-[33px] leading-9 font-bold whitespace-nowrap text-[#ff0000]">
        <span className="font-[Noto_Sans_CJK_SC,sans-serif] font-medium">龙天技术论坛</span>
        <span className="font-[Liberation_Mono,monospace] text-[28px]">:wWw.LtHack.Com</span>
      </p>
      <p className="absolute top-0 right-5 font-[Liberation_Mono,monospace] text-[13px] leading-[14px] font-bold text-[#ff0000]">6:35/25:18</p>

      <FirefoxWindow />
      <UploadDialog />
      <ControlPanel />

      {/* Click highlight and pointer */}
      <div className="absolute top-[474px] left-[568px] size-[30px] rounded-full border-2 border-[#ff0000]" />
      <svg viewBox="0 0 13 20" className="absolute top-[488px] left-[583px] h-5 w-[13px]">
        <path d="M.5 1v15.500L4 13l3 6 2.500-1.200L7 12h5z" fill="#fff" stroke="#000" />
      </svg>

      <footer className="absolute bottom-0 flex h-2.5 w-full justify-end overflow-hidden border-t-2 border-[#6c7a88] bg-linear-to-r from-[#a6c3e0] from-75% via-[#5a6b80] via-80% to-[#8fa4ba] pr-[38px] text-white">
        <span className="leading-[18px]">19:15</span>
      </footer>
      <p className="absolute right-2.5 bottom-2 text-[15px] leading-6 text-[#a8a8a8]">https://blog.csdn.net/qq_33608000</p>
    </div>
  );
}
